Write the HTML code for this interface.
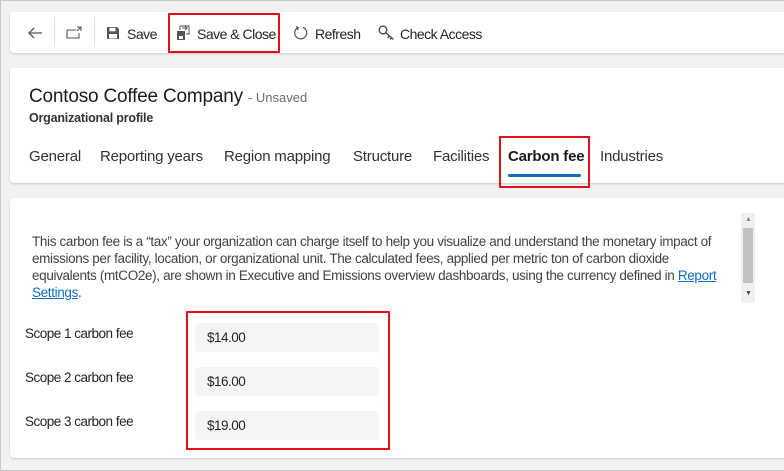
<!DOCTYPE html>
<html><head><style>
*{box-sizing:border-box;margin:0;padding:0}
body{width:784px;height:471px;background:#f3f2f1;font-family:"Liberation Sans",sans-serif;color:#242424;position:relative;overflow:hidden}
.frame{position:absolute;left:0;top:0;width:784px;height:471px;border:1px solid #c8c8c8;border-right:none}
.card{position:absolute;left:10px;right:0;background:#fff;border-radius:4px 0 0 4px;box-shadow:0 1px 2px rgba(0,0,0,.18)}
.abs{position:absolute;white-space:nowrap}
.tb{font-size:14px;top:26px;letter-spacing:-0.5px}
.red{position:absolute;border:2px solid #e3101c}
.tab{position:absolute;top:148px;font-size:15px;letter-spacing:-0.2px;color:#323130}
.lbl{position:absolute;left:25px;font-size:13.5px;letter-spacing:-0.5px;color:#242424}
.inp{position:absolute;left:195px;width:184px;height:29px;background:#f5f5f5;border-radius:3px;font-size:13.5px;padding:7px 0 0 12px;letter-spacing:-0.5px}
</style></head><body>
<div class="frame"></div>
<div class="card" style="top:12px;height:41px"></div>
<svg class="abs" style="left:26px;top:25px" width="18" height="16" viewBox="0 0 18 16"><path d="M16 8H3M8 3L3 8l5 5" fill="none" stroke="#555" stroke-width="1.3"/></svg>
<div class="abs" style="left:54px;top:18px;width:1px;height:29px;background:#ddd"></div>
<svg class="abs" style="left:66px;top:26px" width="16" height="14" viewBox="0 0 16 14"><path d="M1 4h9M1 4v8h12V7M11 1h4v4M15 1l-4 4" fill="none" stroke="#555" stroke-width="1.1"/></svg>
<div class="abs" style="left:94px;top:18px;width:1px;height:29px;background:#ddd"></div>
<svg class="abs" style="left:106px;top:26px" width="14" height="14" viewBox="0 0 14 14"><path d="M1 1h10l2 2v10H1z" fill="#555"/><rect x="3.5" y="1.8" width="6" height="3.5" fill="#fff"/><rect x="3" y="8" width="8" height="4.5" fill="#fff"/></svg>
<div class="abs tb" style="left:127px">Save</div>
<svg class="abs" style="left:176px;top:25px" width="14" height="16" viewBox="0 0 14 16"><rect x="1" y="6" width="8" height="9" fill="#555"/><rect x="3" y="11" width="4" height="3" fill="#fff"/><path d="M4 5V1h9v8h-3M6 3h4M9 1l2 2-2 2" fill="none" stroke="#555" stroke-width="1"/></svg>
<div class="abs tb" style="left:197px">Save &amp; Close</div>
<div class="red" style="left:168px;top:13px;width:112px;height:40px"></div>
<svg class="abs" style="left:293px;top:25px" width="16" height="16" viewBox="0 0 16 16"><path d="M5 2.5A6 6 0 1 0 10 2.3M3 1.5l2.2 1.2L4.3 5" fill="none" stroke="#555" stroke-width="1.2"/></svg>
<div class="abs tb" style="left:315px">Refresh</div>
<svg class="abs" style="left:378px;top:25px" width="18" height="16" viewBox="0 0 18 16"><circle cx="5" cy="5" r="3.8" fill="none" stroke="#444" stroke-width="1.3"/><path d="M7.5 7.5l8 7M11.5 11l-2 2M13.5 13l-1.5 1.5" fill="none" stroke="#444" stroke-width="1.3"/></svg>
<div class="abs tb" style="left:400px">Check Access</div>

<div class="card" style="top:68px;height:115px"></div>
<div class="abs" style="left:29px;top:86px;font-size:19px;letter-spacing:-0.2px;color:#1b1b1b">Contoso Coffee Company <span style="font-size:13px;color:#6b6b6b;letter-spacing:0"> - Unsaved</span></div>
<div class="abs" style="left:29px;top:111px;font-size:12.5px;font-weight:bold;color:#333;letter-spacing:-0.2px">Organizational profile</div>
<div class="tab" style="left:29px">General</div>
<div class="tab" style="left:100px">Reporting years</div>
<div class="tab" style="left:224px">Region mapping</div>
<div class="tab" style="left:353px">Structure</div>
<div class="tab" style="left:433px">Facilities</div>
<div class="tab" style="left:508px;font-weight:bold;color:#1b1b1b">Carbon fee</div>
<div class="tab" style="left:600px">Industries</div>
<div class="abs" style="left:508px;top:174px;width:73px;height:3px;background:#0f6cbd;border-radius:2px"></div>
<div class="red" style="left:499px;top:136px;width:91px;height:52px"></div>

<div class="card" style="top:198px;height:260px"></div>
<div class="abs" style="left:741px;top:213px;width:14px;height:90px;background:#f0f0f0"></div>
<div class="abs" style="left:743px;top:228px;width:10px;height:55px;background:#c1c1c1"></div>
<div class="abs" style="left:745px;top:216px;font-size:7px;color:#888">▲</div>
<div class="abs" style="left:745px;top:290px;font-size:7px;color:#444">▼</div>
<div class="abs" style="left:32px;top:233px;width:696px;white-space:normal;font-size:13.5px;line-height:17px;letter-spacing:-0.35px;color:#424242">This carbon fee is a “tax” your organization can charge itself to help you visualize and understand the monetary impact of emissions per facility, location, or organizational unit. The calculated fees, applied per metric ton of carbon dioxide equivalents (mtCO2e), are shown in Executive and Emissions overview dashboards, using the currency defined in <span style="color:#0f6cbd;text-decoration:underline">Report Settings</span>.</div>
<div class="lbl" style="top:326px">Scope 1 carbon fee</div>
<div class="lbl" style="top:370px">Scope 2 carbon fee</div>
<div class="lbl" style="top:414px">Scope 3 carbon fee</div>
<div class="inp" style="top:323px">$14.00</div>
<div class="inp" style="top:367px">$16.00</div>
<div class="inp" style="top:411px">$19.00</div>
<div class="red" style="left:186px;top:311px;width:204px;height:139px"></div>
</body></html>
